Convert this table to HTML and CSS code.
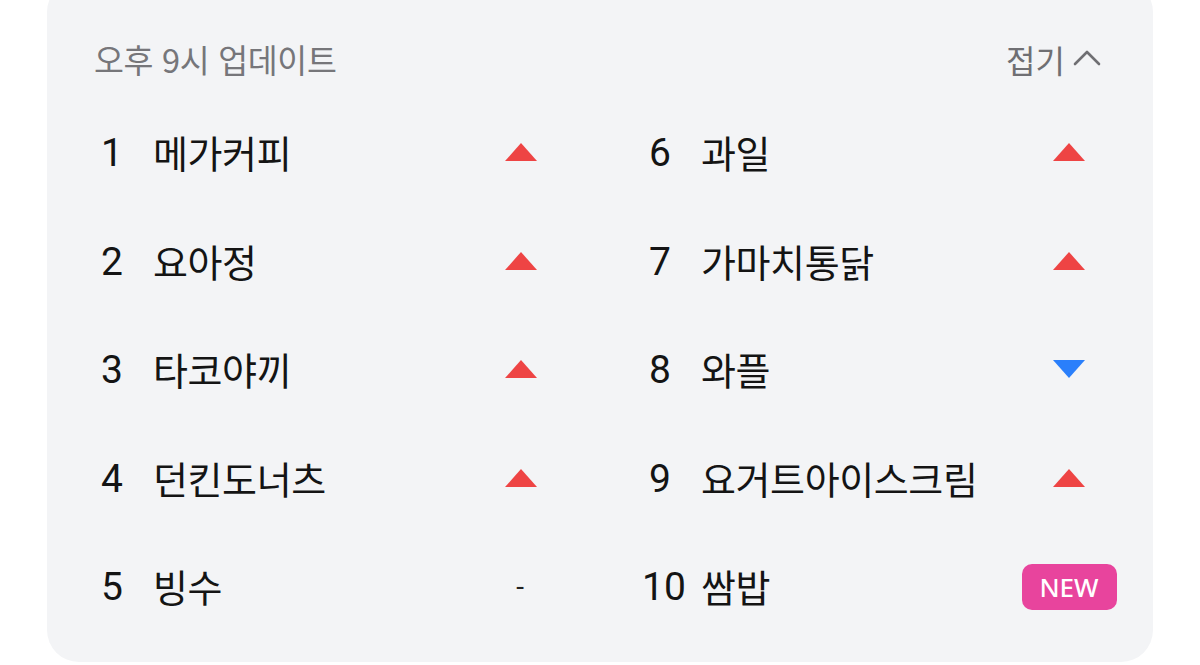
FILE: index.html
```html
<!DOCTYPE html>
<html lang="ko">
<head>
<meta charset="utf-8">
<link rel="stylesheet" href="styles.css">
</head>
<body>
<section class="card">
  <header class="head">
    <span class="updated">오후 9시 업데이트</span>
    <button class="fold">접기
      <svg class="chev" width="28" height="18" viewBox="0 0 28 18"><path d="M2 16 L14 4 L26 16" fill="none" stroke="#6f6f73" stroke-width="2.6" stroke-linecap="round" stroke-linejoin="round"/></svg>
    </button>
  </header>
  <ol class="grid">
    <li class="row"><span class="num">1</span><span class="name">메가커피</span><span class="ind"><i class="up"></i></span></li>
    <li class="row"><span class="num">6</span><span class="name">과일</span><span class="ind"><i class="up"></i></span></li>
    <li class="row"><span class="num">2</span><span class="name">요아정</span><span class="ind"><i class="up"></i></span></li>
    <li class="row"><span class="num">7</span><span class="name">가마치통닭</span><span class="ind"><i class="up"></i></span></li>
    <li class="row"><span class="num">3</span><span class="name">타코야끼</span><span class="ind"><i class="up"></i></span></li>
    <li class="row"><span class="num">8</span><span class="name">와플</span><span class="ind"><i class="down"></i></span></li>
    <li class="row"><span class="num">4</span><span class="name">던킨도너츠</span><span class="ind"><i class="up"></i></span></li>
    <li class="row"><span class="num">9</span><span class="name">요거트아이스크림</span><span class="ind"><i class="up"></i></span></li>
    <li class="row"><span class="num">5</span><span class="name">빙수</span><span class="ind"><span class="same">-</span></span></li>
    <li class="row"><span class="num">10</span><span class="name">쌈밥</span><span class="ind"><span class="new">NEW</span></span></li>
  </ol>
</section>
</body>
</html>
```

FILE: styles.css
```css
html, body {
  margin: 0;
  padding: 0;
  background: #ffffff;
  height: 665px;
  overflow: hidden;
}
body {
  font-family: "Noto Sans CJK KR", "Noto Sans", sans-serif;
  color: #141414;
}
.card {
  margin: -20px 47px 0 47px;
  height: 682px;
  box-sizing: border-box;
  padding: 20px 36px 0 47px;
  background: #f3f4f6;
  border-radius: 32px;
}
.head {
  height: 99px;
  box-sizing: border-box;
  padding-top: 18px;
  display: flex;
  align-items: center;
  justify-content: space-between;
}
.updated {
  font-size: 32.5px;
  color: #76767a;
  letter-spacing: -0.3px;
}
.fold {
  border: 0;
  background: none;
  padding: 0;
  margin-right: 16px;
  font-family: inherit;
  font-size: 32px;
  color: #6f6f73;
  display: flex;
  align-items: center;
  gap: 8px;
}
.chev { display: block; margin-top: -4px; }
.grid {
  list-style: none;
  margin: 0;
  padding: 0;
  display: grid;
  grid-template-columns: 475px 475px;
  column-gap: 73px;
  grid-auto-rows: 108.5px;
}
.row {
  display: flex;
  align-items: center;
}
.num {
  font-family: Roboto, "Noto Sans", sans-serif;
  font-size: 39px;
  font-weight: 400;
  width: 36px;
  text-align: center;
  margin-right: 23px;
  color: #141414;
}
.name {
  flex: 1;
  font-size: 38px;
  letter-spacing: -0.4px;
  color: #141414;
  margin-top: -3px;
}
.ind {
  width: 96px;
  display: flex;
  justify-content: center;
  align-items: center;
}
.up {
  width: 0;
  height: 0;
  border-left: 16px solid transparent;
  border-right: 16px solid transparent;
  border-bottom: 18px solid #ee4444;
  margin-top: -2px;
}
.down {
  width: 0;
  height: 0;
  border-left: 16px solid transparent;
  border-right: 16px solid transparent;
  border-top: 18px solid #2a7ffb;
  margin-top: -2px;
}
.same {
  font-family: Roboto, sans-serif;
  font-size: 28px;
  color: #222;
  margin-right: 2px;
  margin-top: -2px;
}
.new {
  font-family: "Noto Sans", Roboto, sans-serif;
  font-size: 26px;
  font-weight: 500;
  color: #ffffff;
  background: #e8449d;
  border-radius: 10px;
  width: 95px;
  height: 46px;
  display: flex;
  align-items: center;
  justify-content: center;
  margin-top: 0;
}
```
